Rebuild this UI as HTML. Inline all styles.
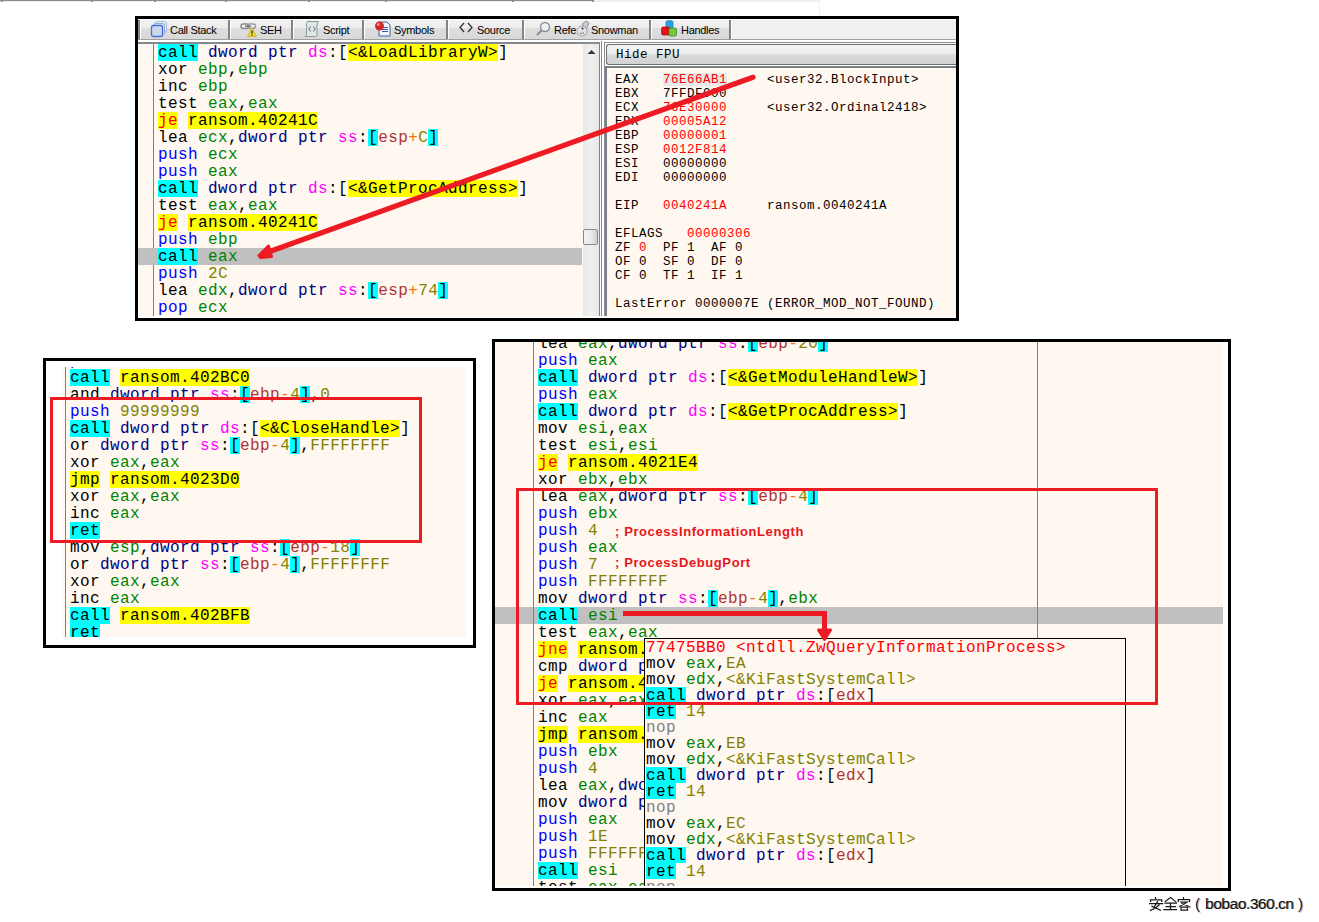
<!DOCTYPE html>
<html><head><meta charset="utf-8">
<style>
*{box-sizing:border-box}
html,body{margin:0;padding:0}
body{width:1319px;height:922px;position:relative;overflow:hidden;background:#fff;font-family:"Liberation Sans",sans-serif}
.abs{position:absolute}
.code{position:absolute;overflow:hidden;background:#fff8f0}
.ln{position:absolute;white-space:pre;font-family:"Liberation Mono",monospace;font-size:16px;letter-spacing:0.4px;color:#000}
.ln,.ln b,.ln i{line-height:19px}
.ln b,.ln i{font-weight:normal;font-style:normal;display:inline-block;height:17px}
.pop .ln b,.pop .ln i{height:16px}
.c,.b{background:#0ff}
.j{color:#f00;background:#ff0}
.u,.a{background:#ff0}
.p{color:#00f}.r{color:#008300}.s{color:#000083}.g{color:#f0f}.m{color:#b03434}.o{color:#f27711}.v{color:#828200}.n{color:#808080}.x{color:#f00}
.rg{position:absolute;white-space:pre;font-family:"Liberation Mono",monospace;font-size:12.5px;letter-spacing:0.5px;line-height:14px;height:14px}
.tab{position:absolute;top:23px;font-size:11px;letter-spacing:-0.3px;color:#000;line-height:14px;white-space:pre}
.sep{position:absolute;top:20px;width:3px;height:19px;background:#7f848c;border-right:1px solid #fff}
.blk{position:absolute;background:#000}
.red{position:absolute;border:3px solid #ed1c24}
</style></head><body>
<!-- faint top strip -->
<div class="abs" style="left:0;top:0;width:819px;height:2px;background:#efefef"></div>
<div class="abs" style="left:0;top:0;width:594px;height:1px;background:#858a94"></div>
<div class="abs" style="left:819px;top:0;width:1px;height:16px;background:#f0f0f0"></div>
<div class="abs" style="left:1px;top:1px;width:2px;height:1px;background:#8a8f99"></div><div class="abs" style="left:91px;top:1px;width:2px;height:1px;background:#8a8f99"></div><div class="abs" style="left:154px;top:1px;width:2px;height:1px;background:#8a8f99"></div><div class="abs" style="left:225px;top:1px;width:2px;height:1px;background:#8a8f99"></div><div class="abs" style="left:308px;top:1px;width:2px;height:1px;background:#8a8f99"></div><div class="abs" style="left:385px;top:1px;width:2px;height:1px;background:#8a8f99"></div><div class="abs" style="left:512px;top:1px;width:2px;height:1px;background:#8a8f99"></div><div class="abs" style="left:592px;top:1px;width:2px;height:1px;background:#8a8f99"></div>

<!-- ============ TOP PANEL ============ -->
<div class="blk" style="left:135px;top:16px;width:824px;height:3px"></div>
<div class="blk" style="left:135px;top:318px;width:824px;height:3px"></div>
<div class="blk" style="left:135px;top:16px;width:3px;height:305px"></div>
<div class="blk" style="left:956px;top:16px;width:3px;height:305px"></div>
<!-- tab bar -->
<div class="abs" style="left:138px;top:19px;width:818px;height:21px;background:linear-gradient(#fff 0,#fff 1px,#f2f2f2 1px,#ececec 9px,#dedede 9px,#d8d8d8 20px,#a0a0a0 20px)"></div>
<div class="abs" style="left:729px;top:19px;width:227px;height:21px;background:linear-gradient(#fff 0,#fff 1px,#f0f0f0 1px,#f0f0f0 20px,#a0a0a0 20px)"></div>
<div class="abs" style="left:138px;top:40px;width:818px;height:2px;background:#fff"></div>
<div class="abs" style="left:138px;top:42px;width:818px;height:2px;background:#868a90"></div>
<div class="sep" style="left:138px"></div>
<div class="sep" style="left:228px"></div>
<div class="sep" style="left:291px"></div>
<div class="sep" style="left:362px"></div>
<div class="sep" style="left:446px"></div>
<div class="sep" style="left:522px"></div>
<div class="sep" style="left:649px"></div>
<div class="sep" style="left:729px"></div>
<!-- tab icons -->
<svg class="abs" style="left:150px;top:20px" width="18" height="18" viewBox="0 0 18 18">
 <rect x="5.5" y="1.5" width="11" height="11" rx="2" fill="#dfe8f4" stroke="#a8bde0"/>
 <rect x="3.5" y="3.5" width="11" height="11" rx="2" fill="#d5e1f1" stroke="#8fa9dc"/>
 <rect x="1.5" y="5.5" width="11" height="11" rx="2" fill="#c9d9ee" stroke="#4a6fd8" stroke-width="1.3"/>
</svg>
<div class="tab" style="left:170px">Call Stack</div>
<svg class="abs" style="left:240px;top:21px" width="18" height="17" viewBox="0 0 18 17">
 <rect x="1" y="3" width="8" height="4.5" rx="2.2" fill="none" stroke="#8a8a8a" stroke-width="1.5"/>
 <rect x="7.5" y="3" width="8" height="4.5" rx="2.2" fill="none" stroke="#9a9a9a" stroke-width="1.5"/>
 <rect x="5" y="4.6" width="6" height="1.4" fill="#777"/>
 <path d="M12 6.5 L16.5 15.5 L7.5 15.5 Z" fill="#f0dc3a" stroke="#c8b020" stroke-width="0.8" stroke-linejoin="round"/>
 <rect x="11.4" y="9.5" width="1.3" height="3" fill="#222"/><rect x="11.4" y="13.3" width="1.3" height="1.2" fill="#222"/>
</svg>
<div class="tab" style="left:260px">SEH</div>
<svg class="abs" style="left:304px;top:20px" width="16" height="18" viewBox="0 0 16 18">
 <path d="M4 1.5 H14.5 Q13 3 13 5 V15 Q13 16.5 11.5 16.5 H1 Q2.5 15.5 2.5 14 V3.5 Q2.5 1.5 4 1.5 Z" fill="#dde8e8" stroke="#8a9c9c"/>
 <path d="M6.5 6.5 L4.8 9 L6.5 11.5 M9.5 6.5 L11.2 9 L9.5 11.5" fill="none" stroke="#666" stroke-width="1"/>
</svg>
<div class="tab" style="left:323px">Script</div>
<svg class="abs" style="left:374px;top:20px" width="18" height="18" viewBox="0 0 18 18">
 <path d="M5 2 H13 L16 5 V16 H5 Z" fill="#f4f6fb" stroke="#4060a8"/>
 <rect x="8" y="7" width="6" height="1" fill="#3a5ab0"/><rect x="8" y="9" width="6" height="1" fill="#3a5ab0"/><rect x="8" y="11" width="6" height="1" fill="#3a5ab0"/>
 <circle cx="5.5" cy="6" r="4.5" fill="#d02a2a"/><circle cx="4.3" cy="4.6" r="1.5" fill="#f08a8a"/>
</svg>
<div class="tab" style="left:394px">Symbols</div>
<svg class="abs" style="left:459px;top:21px" width="14" height="14" viewBox="0 0 14 14">
 <path d="M5 2 L1 6.5 L5 11 M9 2 L13 6.5 L9 11" fill="none" stroke="#333" stroke-width="1.3"/>
</svg>
<div class="tab" style="left:477px">Source</div>
<svg class="abs" style="left:535px;top:21px" width="16" height="16" viewBox="0 0 16 16">
 <circle cx="10" cy="6" r="4.5" fill="#eef2f6" stroke="#8a9098" stroke-width="1.4"/>
 <path d="M7 9 L2 14" stroke="#8a9098" stroke-width="2.2"/>
</svg>
<div class="tab" style="left:554px">Refe</div>
<svg class="abs" style="left:577px;top:20px" width="13" height="18" viewBox="0 0 13 18">
 <path d="M5 4 L9 1 L12 3 L9.5 9 Z" fill="#c8c8d8" stroke="#8a8a96" stroke-width="0.9"/>
 <circle cx="5" cy="11" r="5" fill="#e4e4e4" stroke="#9a9a9a" stroke-width="0.9"/>
 <circle cx="5.5" cy="8.5" r="1" fill="#222"/>
 <path d="M3 13 Q5 14.5 7 12.5" fill="none" stroke="#666" stroke-width="0.8"/>
</svg>
<div class="tab" style="left:591px">Snowman</div>
<svg class="abs" style="left:661px;top:20px" width="17" height="18" viewBox="0 0 17 18">
 <rect x="5" y="0.8" width="7" height="7.5" rx="1.5" fill="#28a4e4" stroke="#1a78b8" stroke-width="0.8"/>
 <rect x="0.6" y="7" width="8" height="8" rx="1.5" fill="#e8101c" stroke="#a80c10" stroke-width="0.8"/>
 <rect x="8" y="8" width="7.5" height="8" rx="1.5" fill="#76c83c" stroke="#3a8a1c" stroke-width="0.8"/>
</svg>
<div class="tab" style="left:681px">Handles</div>

<!-- code area top -->
<div class="code" style="left:138px;top:44px;width:445px;height:272px">
 <div class="abs" style="left:0;top:0;width:1px;height:272px;background:#fff"></div>
 <div class="abs" style="left:15px;top:0;width:1px;height:272px;background:#808080"></div>
 <div class="abs" style="left:0;top:204px;width:444px;height:17px;background:#c0c0c0"></div>
</div>
<div class="code" style="left:138px;top:44px;width:445px;height:272px;background:transparent">
 <div style="position:absolute;left:-138px;top:-44px">
<div class="ln" style="top:44px;left:158px;height:17px;line-height:19px"><b class="c">call</b> <i class="s">dword ptr</i> <i class="g">ds</i>:[<b class="a">&lt;&amp;LoadLibraryW&gt;</b>]</div>
<div class="ln" style="top:61px;left:158px;height:17px;line-height:19px">xor <i class="r">ebp</i>,<i class="r">ebp</i></div>
<div class="ln" style="top:78px;left:158px;height:17px;line-height:19px">inc <i class="r">ebp</i></div>
<div class="ln" style="top:95px;left:158px;height:17px;line-height:19px">test <i class="r">eax</i>,<i class="r">eax</i></div>
<div class="ln" style="top:112px;left:158px;height:17px;line-height:19px"><b class="j">je</b> <b class="a">ransom.40241C</b></div>
<div class="ln" style="top:129px;left:158px;height:17px;line-height:19px">lea <i class="r">ecx</i>,<i class="s">dword ptr</i> <i class="g">ss</i>:<b class="b">[</b><i class="m">esp</i><i class="o">+</i><i class="v">C</i><b class="b">]</b></div>
<div class="ln" style="top:146px;left:158px;height:17px;line-height:19px"><i class="p">push</i> <i class="r">ecx</i></div>
<div class="ln" style="top:163px;left:158px;height:17px;line-height:19px"><i class="p">push</i> <i class="r">eax</i></div>
<div class="ln" style="top:180px;left:158px;height:17px;line-height:19px"><b class="c">call</b> <i class="s">dword ptr</i> <i class="g">ds</i>:[<b class="a">&lt;&amp;GetProcAddress&gt;</b>]</div>
<div class="ln" style="top:197px;left:158px;height:17px;line-height:19px">test <i class="r">eax</i>,<i class="r">eax</i></div>
<div class="ln" style="top:214px;left:158px;height:17px;line-height:19px"><b class="j">je</b> <b class="a">ransom.40241C</b></div>
<div class="ln" style="top:231px;left:158px;height:17px;line-height:19px"><i class="p">push</i> <i class="r">ebp</i></div>
<div class="ln" style="top:248px;left:158px;height:17px;line-height:19px"><b class="c">call</b> <i class="r">eax</i></div>
<div class="ln" style="top:265px;left:158px;height:17px;line-height:19px"><i class="p">push</i> <i class="v">2C</i></div>
<div class="ln" style="top:282px;left:158px;height:17px;line-height:19px">lea <i class="r">edx</i>,<i class="s">dword ptr</i> <i class="g">ss</i>:<b class="b">[</b><i class="m">esp</i><i class="o">+</i><i class="v">74</i><b class="b">]</b></div>
<div class="ln" style="top:299px;left:158px;height:17px;line-height:19px"><i class="p">pop</i> <i class="r">ecx</i></div>
 </div>
</div>
<!-- scrollbar -->
<div class="abs" style="left:583px;top:42px;width:17px;height:274px;background:linear-gradient(90deg,#e8e8e8,#f0f0f0 50%,#e6e6e6);border-top:2px solid #8a8f96;border-right:1px solid #7f848b"></div>
<svg class="abs" style="left:587px;top:49px" width="9" height="6" viewBox="0 0 9 6"><path d="M0.5 5 L4.5 1 L8.5 5 Z" fill="#333"/></svg>
<div class="abs" style="left:583px;top:229px;width:15px;height:16px;border:1px solid #888;border-radius:2px;background:linear-gradient(90deg,#f4f4f4,#e8e8e8 60%,#d0d0d0)"></div>
<!-- splitter -->
<div class="abs" style="left:600px;top:40px;width:4px;height:276px;background:#fff"></div>
<div class="abs" style="left:601px;top:41px;width:1px;height:275px;background:#8a8a8a"></div>
<!-- register panel -->
<div class="abs" style="left:604px;top:42px;width:352px;height:274px;background:#fff;border-left:1px solid #8a8f96;border-top:1px solid #8a8f96"></div>
<div class="abs" style="left:606px;top:44px;width:350px;height:21px;border:1px solid #6e6e6e;border-right:none;border-radius:3px 0 0 3px;background:linear-gradient(#f4f4f4,#ececec 48%,#dadada 52%,#d2d2d2)"></div>
<div class="rg" style="left:616px;top:48px">Hide FPU</div>
<div class="abs" style="left:605px;top:66px;width:351px;height:250px;background:#fff8f0;border-left:2px solid #7a8088;border-top:2px solid #7a8088"></div>
<div class="rg" style="top:73px;left:615px;color:#000;">EAX</div>
<div style="position:absolute;left:663px;top:73px;width:64px;height:13px;background:#e9e9e9"></div>
<div class="rg" style="top:73px;left:663px;color:#f00;">76E66AB1</div>
<div class="rg" style="top:73px;left:767px;color:#000;">&lt;user32.BlockInput&gt;</div>
<div class="rg" style="top:87px;left:615px;color:#000;">EBX</div>
<div class="rg" style="top:87px;left:663px;color:#000;">7FFDF000</div>
<div class="rg" style="top:101px;left:615px;color:#000;">ECX</div>
<div class="rg" style="top:101px;left:663px;color:#f00;">76E30000</div>
<div class="rg" style="top:101px;left:767px;color:#000;">&lt;user32.Ordinal2418&gt;</div>
<div class="rg" style="top:115px;left:615px;color:#000;">EDX</div>
<div class="rg" style="top:115px;left:663px;color:#f00;">00005A12</div>
<div class="rg" style="top:129px;left:615px;color:#000;">EBP</div>
<div class="rg" style="top:129px;left:663px;color:#f00;">00000001</div>
<div class="rg" style="top:143px;left:615px;color:#000;">ESP</div>
<div class="rg" style="top:143px;left:663px;color:#f00;">0012F814</div>
<div class="rg" style="top:157px;left:615px;color:#000;">ESI</div>
<div class="rg" style="top:157px;left:663px;color:#000;">00000000</div>
<div class="rg" style="top:171px;left:615px;color:#000;">EDI</div>
<div class="rg" style="top:171px;left:663px;color:#000;">00000000</div>
<div class="rg" style="top:199px;left:615px;color:#000;">EIP</div>
<div class="rg" style="top:199px;left:663px;color:#f00;">0040241A</div>
<div class="rg" style="top:199px;left:767px;color:#000;">ransom.0040241A</div>
<div class="rg" style="top:227px;left:615px;color:#000;">EFLAGS</div>
<div class="rg" style="top:227px;left:687px;color:#f00;">00000306</div>
<div class="rg" style="top:241px;left:615px;color:#000;">ZF</div>
<div class="rg" style="top:241px;left:639px;color:#f00;">0</div>
<div class="rg" style="top:241px;left:663px;color:#000;">PF 1</div>
<div class="rg" style="top:241px;left:711px;color:#000;">AF 0</div>
<div class="rg" style="top:255px;left:615px;color:#000;">OF 0</div>
<div class="rg" style="top:255px;left:663px;color:#000;">SF 0</div>
<div class="rg" style="top:255px;left:711px;color:#000;">DF 0</div>
<div class="rg" style="top:269px;left:615px;color:#000;">CF 0</div>
<div class="rg" style="top:269px;left:663px;color:#000;">TF 1</div>
<div class="rg" style="top:269px;left:711px;color:#000;">IF 1</div>
<div class="rg" style="top:297px;left:615px;color:#000;">LastError 0000007E (ERROR_MOD_NOT_FOUND)</div>

<!-- ============ BOTTOM LEFT PANEL ============ -->
<div class="blk" style="left:43px;top:358px;width:433px;height:3px"></div>
<div class="blk" style="left:43px;top:645px;width:433px;height:3px"></div>
<div class="blk" style="left:43px;top:358px;width:3px;height:290px"></div>
<div class="blk" style="left:473px;top:358px;width:3px;height:290px"></div>
<div class="code" style="left:62px;top:367px;width:404px;height:270px">
 <div class="abs" style="left:3px;top:0;width:1px;height:270px;background:#808080"></div>
 <div style="position:absolute;left:-62px;top:-367px">
<div class="ln" style="top:352px;left:70px;height:17px;line-height:19px"><i class="p">push</i> <i class="r">eax</i></div>
<div class="ln" style="top:369px;left:70px;height:17px;line-height:19px"><b class="c">call</b> <b class="a">ransom.402BC0</b></div>
<div class="ln" style="top:386px;left:70px;height:17px;line-height:19px">and <i class="s">dword ptr</i> <i class="g">ss</i>:<b class="b">[</b><i class="m">ebp</i><i class="o">-</i><i class="v">4</i><b class="b">]</b>,<i class="v">0</i></div>
<div class="ln" style="top:403px;left:70px;height:17px;line-height:19px"><i class="p">push</i> <i class="v">99999999</i></div>
<div class="ln" style="top:420px;left:70px;height:17px;line-height:19px"><b class="c">call</b> <i class="s">dword ptr</i> <i class="g">ds</i>:[<b class="a">&lt;&amp;CloseHandle&gt;</b>]</div>
<div class="ln" style="top:437px;left:70px;height:17px;line-height:19px">or <i class="s">dword ptr</i> <i class="g">ss</i>:<b class="b">[</b><i class="m">ebp</i><i class="o">-</i><i class="v">4</i><b class="b">]</b>,<i class="v">FFFFFFFF</i></div>
<div class="ln" style="top:454px;left:70px;height:17px;line-height:19px">xor <i class="r">eax</i>,<i class="r">eax</i></div>
<div class="ln" style="top:471px;left:70px;height:17px;line-height:19px"><b class="u">jmp</b> <b class="a">ransom.4023D0</b></div>
<div class="ln" style="top:488px;left:70px;height:17px;line-height:19px">xor <i class="r">eax</i>,<i class="r">eax</i></div>
<div class="ln" style="top:505px;left:70px;height:17px;line-height:19px">inc <i class="r">eax</i></div>
<div class="ln" style="top:522px;left:70px;height:17px;line-height:19px"><b class="c">ret</b></div>
<div class="ln" style="top:539px;left:70px;height:17px;line-height:19px">mov <i class="r">esp</i>,<i class="s">dword ptr</i> <i class="g">ss</i>:<b class="b">[</b><i class="m">ebp</i><i class="o">-</i><i class="v">18</i><b class="b">]</b></div>
<div class="ln" style="top:556px;left:70px;height:17px;line-height:19px">or <i class="s">dword ptr</i> <i class="g">ss</i>:<b class="b">[</b><i class="m">ebp</i><i class="o">-</i><i class="v">4</i><b class="b">]</b>,<i class="v">FFFFFFFF</i></div>
<div class="ln" style="top:573px;left:70px;height:17px;line-height:19px">xor <i class="r">eax</i>,<i class="r">eax</i></div>
<div class="ln" style="top:590px;left:70px;height:17px;line-height:19px">inc <i class="r">eax</i></div>
<div class="ln" style="top:607px;left:70px;height:17px;line-height:19px"><b class="c">call</b> <b class="a">ransom.402BFB</b></div>
<div class="ln" style="top:624px;left:70px;height:17px;line-height:19px"><b class="c">ret</b></div>
 </div>
</div>
<div class="red" style="left:50px;top:397px;width:372px;height:146px"></div>

<!-- ============ BOTTOM RIGHT PANEL ============ -->
<div class="blk" style="left:492px;top:339px;width:739px;height:3px"></div>
<div class="blk" style="left:492px;top:888px;width:739px;height:3px"></div>
<div class="blk" style="left:492px;top:339px;width:3px;height:552px"></div>
<div class="blk" style="left:1228px;top:339px;width:3px;height:552px"></div>
<div class="code" style="left:495px;top:342px;width:728px;height:544px">
 <div class="abs" style="left:0;top:265px;width:728px;height:17px;background:#c0c0c0"></div>
 <div class="abs" style="left:38px;top:0;width:1px;height:544px;background:#808080"></div>
 <div class="abs" style="left:542px;top:0;width:1px;height:544px;background:#808080"></div>
 <div style="position:absolute;left:-495px;top:-342px">
<div class="ln" style="top:335px;left:538px;height:17px;line-height:19px">lea <i class="r">eax</i>,<i class="s">dword ptr</i> <i class="g">ss</i>:<b class="b">[</b><i class="m">ebp</i><i class="o">-</i><i class="v">20</i><b class="b">]</b></div>
<div class="ln" style="top:352px;left:538px;height:17px;line-height:19px"><i class="p">push</i> <i class="r">eax</i></div>
<div class="ln" style="top:369px;left:538px;height:17px;line-height:19px"><b class="c">call</b> <i class="s">dword ptr</i> <i class="g">ds</i>:[<b class="a">&lt;&amp;GetModuleHandleW&gt;</b>]</div>
<div class="ln" style="top:386px;left:538px;height:17px;line-height:19px"><i class="p">push</i> <i class="r">eax</i></div>
<div class="ln" style="top:403px;left:538px;height:17px;line-height:19px"><b class="c">call</b> <i class="s">dword ptr</i> <i class="g">ds</i>:[<b class="a">&lt;&amp;GetProcAddress&gt;</b>]</div>
<div class="ln" style="top:420px;left:538px;height:17px;line-height:19px">mov <i class="r">esi</i>,<i class="r">eax</i></div>
<div class="ln" style="top:437px;left:538px;height:17px;line-height:19px">test <i class="r">esi</i>,<i class="r">esi</i></div>
<div class="ln" style="top:454px;left:538px;height:17px;line-height:19px"><b class="j">je</b> <b class="a">ransom.4021E4</b></div>
<div class="ln" style="top:471px;left:538px;height:17px;line-height:19px">xor <i class="r">ebx</i>,<i class="r">ebx</i></div>
<div class="ln" style="top:488px;left:538px;height:17px;line-height:19px">lea <i class="r">eax</i>,<i class="s">dword ptr</i> <i class="g">ss</i>:<b class="b">[</b><i class="m">ebp</i><i class="o">-</i><i class="v">4</i><b class="b">]</b></div>
<div class="ln" style="top:505px;left:538px;height:17px;line-height:19px"><i class="p">push</i> <i class="r">ebx</i></div>
<div class="ln" style="top:522px;left:538px;height:17px;line-height:19px"><i class="p">push</i> <i class="v">4</i></div>
<div class="ln" style="top:539px;left:538px;height:17px;line-height:19px"><i class="p">push</i> <i class="r">eax</i></div>
<div class="ln" style="top:556px;left:538px;height:17px;line-height:19px"><i class="p">push</i> <i class="v">7</i></div>
<div class="ln" style="top:573px;left:538px;height:17px;line-height:19px"><i class="p">push</i> <i class="v">FFFFFFFF</i></div>
<div class="ln" style="top:590px;left:538px;height:17px;line-height:19px">mov <i class="s">dword ptr</i> <i class="g">ss</i>:<b class="b">[</b><i class="m">ebp</i><i class="o">-</i><i class="v">4</i><b class="b">]</b>,<i class="r">ebx</i></div>
<div class="ln" style="top:607px;left:538px;height:17px;line-height:19px"><b class="c">call</b> <i class="r">esi</i></div>
<div class="ln" style="top:624px;left:538px;height:17px;line-height:19px">test <i class="r">eax</i>,<i class="r">eax</i></div>
<div class="ln" style="top:641px;left:538px;height:17px;line-height:19px"><b class="j">jne</b> <b class="a">ransom.4021D4</b></div>
<div class="ln" style="top:658px;left:538px;height:17px;line-height:19px">cmp <i class="s">dword ptr</i> <i class="g">ss</i>:<b class="b">[</b><i class="m">ebp</i><i class="o">-</i><i class="v">4</i><b class="b">]</b>,<i class="v">0</i></div>
<div class="ln" style="top:675px;left:538px;height:17px;line-height:19px"><b class="j">je</b> <b class="a">ransom.4021D4</b></div>
<div class="ln" style="top:692px;left:538px;height:17px;line-height:19px">xor <i class="r">eax</i>,<i class="r">eax</i></div>
<div class="ln" style="top:709px;left:538px;height:17px;line-height:19px">inc <i class="r">eax</i></div>
<div class="ln" style="top:726px;left:538px;height:17px;line-height:19px"><b class="u">jmp</b> <b class="a">ransom.4021E6</b></div>
<div class="ln" style="top:743px;left:538px;height:17px;line-height:19px"><i class="p">push</i> <i class="r">ebx</i></div>
<div class="ln" style="top:760px;left:538px;height:17px;line-height:19px"><i class="p">push</i> <i class="v">4</i></div>
<div class="ln" style="top:777px;left:538px;height:17px;line-height:19px">lea <i class="r">eax</i>,<i class="s">dword ptr</i> <i class="g">ss</i>:<b class="b">[</b><i class="m">ebp</i><i class="o">-</i><i class="v">4</i><b class="b">]</b></div>
<div class="ln" style="top:794px;left:538px;height:17px;line-height:19px">mov <i class="s">dword ptr</i> <i class="g">ss</i>:<b class="b">[</b><i class="m">ebp</i><i class="o">-</i><i class="v">4</i><b class="b">]</b>,<i class="r">ebx</i></div>
<div class="ln" style="top:811px;left:538px;height:17px;line-height:19px"><i class="p">push</i> <i class="r">eax</i></div>
<div class="ln" style="top:828px;left:538px;height:17px;line-height:19px"><i class="p">push</i> <i class="v">1E</i></div>
<div class="ln" style="top:845px;left:538px;height:17px;line-height:19px"><i class="p">push</i> <i class="v">FFFFFFFF</i></div>
<div class="ln" style="top:862px;left:538px;height:17px;line-height:19px"><b class="c">call</b> <i class="r">esi</i></div>
<div class="ln" style="top:879px;left:538px;height:17px;line-height:19px">test <i class="r">eax</i>,<i class="r">eax</i></div>
 </div>
 <div class="abs" style="left:120px;top:183px;white-space:pre;font-weight:bold;font-size:13px;color:#e8141c;letter-spacing:0.6px;line-height:14px">; ProcessInformationLength</div>
 <div class="abs" style="left:120px;top:214px;white-space:pre;font-weight:bold;font-size:13px;color:#e8141c;letter-spacing:0.6px;line-height:14px">; ProcessDebugPort</div>
 <!-- popup -->
 <div class="abs pop" style="left:149px;top:296px;width:482px;height:260px;background:#fff8f0;border:1px solid #000;overflow:hidden">
  <div style="position:absolute;left:-645px;top:-639px">
<div class="ln" style="top:639px;left:646px;height:16px;line-height:19px"><i class="x">77475BB0 &lt;ntdll.ZwQueryInformationProcess&gt;</i></div>
<div class="ln" style="top:655px;left:646px;height:16px;line-height:19px">mov <i class="r">eax</i>,<i class="v">EA</i></div>
<div class="ln" style="top:671px;left:646px;height:16px;line-height:19px">mov <i class="r">edx</i>,<i class="v">&lt;&amp;KiFastSystemCall&gt;</i></div>
<div class="ln" style="top:687px;left:646px;height:16px;line-height:19px"><b class="c">call</b> <i class="s">dword ptr</i> <i class="g">ds</i>:[<i class="m">edx</i>]</div>
<div class="ln" style="top:703px;left:646px;height:16px;line-height:19px"><b class="c">ret</b> <i class="v">14</i></div>
<div class="ln" style="top:719px;left:646px;height:16px;line-height:19px"><i class="n">nop</i></div>
<div class="ln" style="top:735px;left:646px;height:16px;line-height:19px">mov <i class="r">eax</i>,<i class="v">EB</i></div>
<div class="ln" style="top:751px;left:646px;height:16px;line-height:19px">mov <i class="r">edx</i>,<i class="v">&lt;&amp;KiFastSystemCall&gt;</i></div>
<div class="ln" style="top:767px;left:646px;height:16px;line-height:19px"><b class="c">call</b> <i class="s">dword ptr</i> <i class="g">ds</i>:[<i class="m">edx</i>]</div>
<div class="ln" style="top:783px;left:646px;height:16px;line-height:19px"><b class="c">ret</b> <i class="v">14</i></div>
<div class="ln" style="top:799px;left:646px;height:16px;line-height:19px"><i class="n">nop</i></div>
<div class="ln" style="top:815px;left:646px;height:16px;line-height:19px">mov <i class="r">eax</i>,<i class="v">EC</i></div>
<div class="ln" style="top:831px;left:646px;height:16px;line-height:19px">mov <i class="r">edx</i>,<i class="v">&lt;&amp;KiFastSystemCall&gt;</i></div>
<div class="ln" style="top:847px;left:646px;height:16px;line-height:19px"><b class="c">call</b> <i class="s">dword ptr</i> <i class="g">ds</i>:[<i class="m">edx</i>]</div>
<div class="ln" style="top:863px;left:646px;height:16px;line-height:19px"><b class="c">ret</b> <i class="v">14</i></div>
<div class="ln" style="top:879px;left:646px;height:16px;line-height:19px"><i class="n">nop</i></div>
  </div>
 </div>
</div>
<div class="red" style="left:516px;top:488px;width:642px;height:217px"></div>

<!-- arrows -->
<svg class="abs" style="left:0;top:0" width="1319" height="922" viewBox="0 0 1319 922">
 <g fill="#ed1c24" stroke="#ed1c24" stroke-linejoin="round" stroke-linecap="round">
  <line x1="753" y1="77.2" x2="267" y2="252.5" stroke-width="5.2"/>
  <path d="M259 255.5 L268.5 246 L271.5 256.5 L260.5 257.5 Z" stroke-width="3"/>
  <path d="M623 613.5 H824.5 V630" fill="none" stroke-width="5" stroke-linecap="butt" stroke-linejoin="miter"/>
  <path d="M818.5 630 L830.5 630 L824.5 639.5 Z" stroke-width="3"/>
 </g>
</svg>

<!-- watermark -->
<svg class="abs" style="left:1149px;top:897px" width="42" height="14" viewBox="0 0 42 14">
 <g fill="none" stroke="#1a1a1a" stroke-width="1.25" stroke-linecap="square">
  <path d="M6.5 0.3 V1.3 M1.5 4.3 V2.8 H12.8 V4.3"/>
  <path d="M0.3 6.6 H13.6 M8.5 4.6 L5.5 9.5 M3 9.3 Q7 11 11.5 13.3 M1.5 13.3 Q6 12 10 8"/>
  <path d="M21.5 0.5 L16.3 4.5 M21.5 0.5 L27 5" stroke-width="1.2"/>
  <path d="M16 6.2 H27.3 M17 9.5 H26.5 M14.8 12.6 H27.5 M21.5 6.2 V12.6"/>
  <path d="M34.5 0.3 V1.3 M29.3 4.3 V2.6 H40.6 V4.3"/>
  <path d="M32 5.2 H38 L30.5 9.5 M33 6.5 L41 10"/>
  <path d="M32 10 H38.5 V13.2 H32 Z"/>
 </g>
</svg>
<div class="abs" style="left:1195px;top:895px;font-size:15px;line-height:17px;color:#111;white-space:pre;text-shadow:1px 1px 0 #bbb">(</div>
<div class="abs" style="left:1205px;top:895px;font-size:15.4px;line-height:17px;color:#111;white-space:pre;letter-spacing:-0.4px;text-shadow:1px 0 0 #999">bobao.360.cn</div>
<div class="abs" style="left:1298px;top:895px;font-size:15px;line-height:17px;color:#111;white-space:pre;text-shadow:1px 1px 0 #bbb">)</div>
</body></html>
